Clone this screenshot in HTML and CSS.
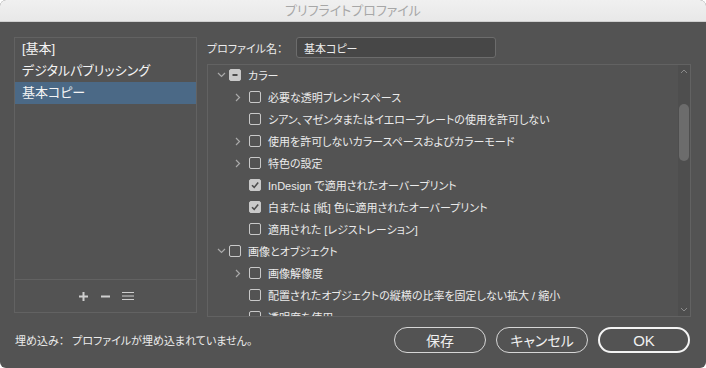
FILE: index.html
```html
<!DOCTYPE html>
<html lang="ja">
<head>
    <meta charset="UTF-8">
    <meta name="viewport" content="width=device-width, initial-scale=1.0">
    <title>プリフライトプロファイル</title>
    <link rel="stylesheet" href="styles.css">
</head>
<body>
    <div class="window">
        <div class="titlebar">プリフライトプロファイル</div>
        <div class="content">
            <section class="profiles">
                <div class="profile-list">
                    <div class="profile-item">[基本]</div>
                    <div class="profile-item">デジタルパブリッシング</div>
                    <div class="profile-item selected">基本コピー</div>
                </div>
                <div class="profile-tools">
                    <svg width="11" height="11" viewBox="0 0 11 11"><path d="M5.5 1v9M1 5.5h9" stroke="#cfcfcf" stroke-width="2"/></svg>
                    <svg width="11" height="11" viewBox="0 0 11 11"><path d="M1 5.5h9" stroke="#cfcfcf" stroke-width="2"/></svg>
                    <svg width="12" height="10" viewBox="0 0 12 10"><path d="M0 1.5h12M0 5h12M0 8.5h12" stroke="#cfcfcf" stroke-width="1"/></svg>
                </div>
            </section>
            <section class="settings">
                <div class="name-row">
                    <label class="name-label" for="profile-name">プロファイル名：</label>
                    <input type="text" id="profile-name" class="name-input" value="基本コピー">
                </div>
                <div class="tree">
                    <div class="tree-rows" id="tree-rows"></div>
                    <div class="scrollbar">
                        <svg class="scroll-arrow" width="8" height="5" viewBox="0 0 8 5"><path d="M1 4l3-3 3 3" fill="none" stroke="#8a8a8a" stroke-width="1"/></svg>
                        <div class="scroll-track"><div class="scroll-thumb"></div></div>
                        <svg class="scroll-arrow" width="8" height="5" viewBox="0 0 8 5"><path d="M1 1l3 3 3-3" fill="none" stroke="#8a8a8a" stroke-width="1"/></svg>
                    </div>
                </div>
            </section>
        </div>
        <footer class="footer">
            <div class="embed-info">
                <span class="embed-label">埋め込み：</span>
                <span>プロファイルが埋め込まれていません。</span>
            </div>
            <div class="buttons">
                <button class="btn">保存</button>
                <button class="btn">キャンセル</button>
                <button class="btn primary">OK</button>
            </div>
        </footer>
    </div>

    <script>
        // level, twisty (down / right / none), state (none / on / mixed), label
        const rows = [
            [0, 'down', 'mixed', 'カラー'],
            [1, 'right', 'none', '必要な透明ブレンドスペース'],
            [1, 'none', 'none', 'シアン、マゼンタまたはイエロープレートの使用を許可しない'],
            [1, 'right', 'none', '使用を許可しないカラースペースおよびカラーモード'],
            [1, 'right', 'none', '特色の設定'],
            [1, 'none', 'on', 'InDesign で適用されたオーバープリント'],
            [1, 'none', 'on', '白または [紙] 色に適用されたオーバープリント'],
            [1, 'none', 'none', '適用された [レジストレーション]'],
            [0, 'down', 'none', '画像とオブジェクト'],
            [1, 'right', 'none', '画像解像度'],
            [1, 'none', 'none', '配置されたオブジェクトの縦横の比率を固定しない拡大 / 縮小'],
            [1, 'none', 'none', '透明度を使用']
        ];

        const twisties = {
            down: '<svg class="tw-down" width="9" height="6" viewBox="0 0 9 6"><path d="M1 1l3.5 3.5L8 1" fill="none" stroke="#a9a9a9" stroke-width="1.2"/></svg>',
            right: '<svg class="tw-right" width="6" height="9" viewBox="0 0 6 9"><path d="M1 1l3.5 3.5L1 8" fill="none" stroke="#a9a9a9" stroke-width="1.2"/></svg>',
            none: ''
        };

        const marks = {
            none: '',
            on: '<svg width="10" height="10" viewBox="0 0 10 10"><path d="M2 5.2l2.2 2.2L8.2 2.6" fill="none" stroke="#4c4c4c" stroke-width="1.6"/></svg>',
            mixed: '<svg width="10" height="10" viewBox="0 0 10 10"><path d="M2.5 5h5" stroke="#4c4c4c" stroke-width="1.8"/></svg>'
        };

        const treeRows = document.getElementById('tree-rows');
        rows.forEach(([level, twisty, state, label]) => {
            const row = document.createElement('div');
            row.className = `tree-row level-${level}`;
            row.innerHTML =
                `<span class="twisty">${twisties[twisty]}</span>` +
                `<span class="check ${state}">${marks[state]}</span>` +
                `<span class="tree-label">${label}</span>`;
            treeRows.appendChild(row);
        });
    </script>
</body>
</html>
```

FILE: styles.css
```css
:root {
    --panel-color: #535353;
    --border-color: #626262;
    --text-color: #ebebeb;
    --select-color: #4b6986;
}

html {
    background-color: #ffffff;
}

body {
    margin: 0;
    font-family: "Liberation Sans", "Noto Sans CJK JP", sans-serif;
    font-feature-settings: "palt";
    color: var(--text-color);
}

.window {
    width: 706px;
    height: 368px;
    background-color: var(--panel-color);
    border-radius: 6px;
    overflow: hidden;
    display: flex;
    flex-direction: column;
}

.titlebar {
    height: 21px;
    line-height: 21px;
    background: linear-gradient(#f0f0f0, #e8e8e8);
    border-bottom: 1px solid #cfcfcf;
    color: #a7a7a7;
    font-size: 13px;
    text-align: center;
}

.content {
    display: flex;
    align-items: flex-start;
    gap: 10px;
    padding: 15px 15px 0 14px;
}

.profiles {
    width: 181px;
    height: 274px;
    border: 1px solid var(--border-color);
    display: flex;
    flex-direction: column;
}

.profile-list {
    flex: 1;
}

.profile-item {
    height: 22px;
    line-height: 22px;
    padding-left: 7px;
    font-size: 13px;
    color: #f4f4f4;
}

.profile-item.selected {
    background-color: var(--select-color);
}

.profile-tools {
    height: 32px;
    border-top: 1px solid var(--border-color);
    display: flex;
    align-items: center;
    justify-content: center;
    gap: 11px;
}

.settings {
    flex: 1;
    display: flex;
    flex-direction: column;
    gap: 6px;
}

.name-row {
    display: flex;
    align-items: center;
    gap: 8px;
}

.name-label {
    font-size: 11px;
    width: 81px;
}

.name-input {
    width: 200px;
    height: 21px;
    box-sizing: border-box;
    padding: 0 7px;
    background-color: #474747;
    border: 1px solid #6c6c6c;
    border-radius: 3px;
    color: var(--text-color);
    font-family: inherit;
    font-size: 11px;
    font-feature-settings: "palt";
    outline: none;
}

.tree {
    height: 251px;
    border: 1px solid var(--border-color);
    display: flex;
    overflow: hidden;
}

.tree-rows {
    flex: 1;
    overflow: hidden;
    margin-top: -1px;
}

.tree-row {
    height: 22px;
    display: flex;
    align-items: center;
    font-size: 11px;
    white-space: nowrap;
}

.level-0 {
    padding-left: 4px;
}

.level-1 {
    padding-left: 24px;
}

.twisty {
    width: 17px;
    height: 12px;
    display: flex;
    align-items: center;
}

.tw-down {
    margin-left: 5px;
}

.tw-right {
    margin-left: 3px;
}

.check {
    width: 12px;
    height: 12px;
    box-sizing: border-box;
    border: 1px solid #c9c9c9;
    border-radius: 2px;
    margin-right: 7px;
    display: flex;
    align-items: center;
    justify-content: center;
}

.check.on, .check.mixed {
    background-color: #c9c9c9;
}

.scrollbar {
    width: 12px;
    background-color: #4e4e4e;
    display: flex;
    flex-direction: column;
    align-items: center;
    padding: 4px 0;
    box-sizing: border-box;
}

.scroll-track {
    flex: 1;
    width: 100%;
    padding-top: 30px;
    box-sizing: border-box;
}

.scroll-thumb {
    width: 10px;
    height: 57px;
    margin: 0 auto;
    border-radius: 5px;
    background-color: #6c6c6c;
}

.footer {
    display: flex;
    align-items: center;
    justify-content: space-between;
    padding: 10px 16px 0 15px;
}

.embed-info {
    font-size: 11px;
    display: flex;
    gap: 8px;
}

.buttons {
    display: flex;
    gap: 10px;
}

.btn {
    width: 92px;
    height: 26px;
    border: 1px solid #d6d6d6;
    border-radius: 13px;
    background-color: transparent;
    color: #f0f0f0;
    font-family: inherit;
    font-size: 14px;
    font-feature-settings: "palt";
    padding: 0;
}

.btn.primary {
    border: 2px solid #f4f4f4;
    font-size: 15px;
}
```
